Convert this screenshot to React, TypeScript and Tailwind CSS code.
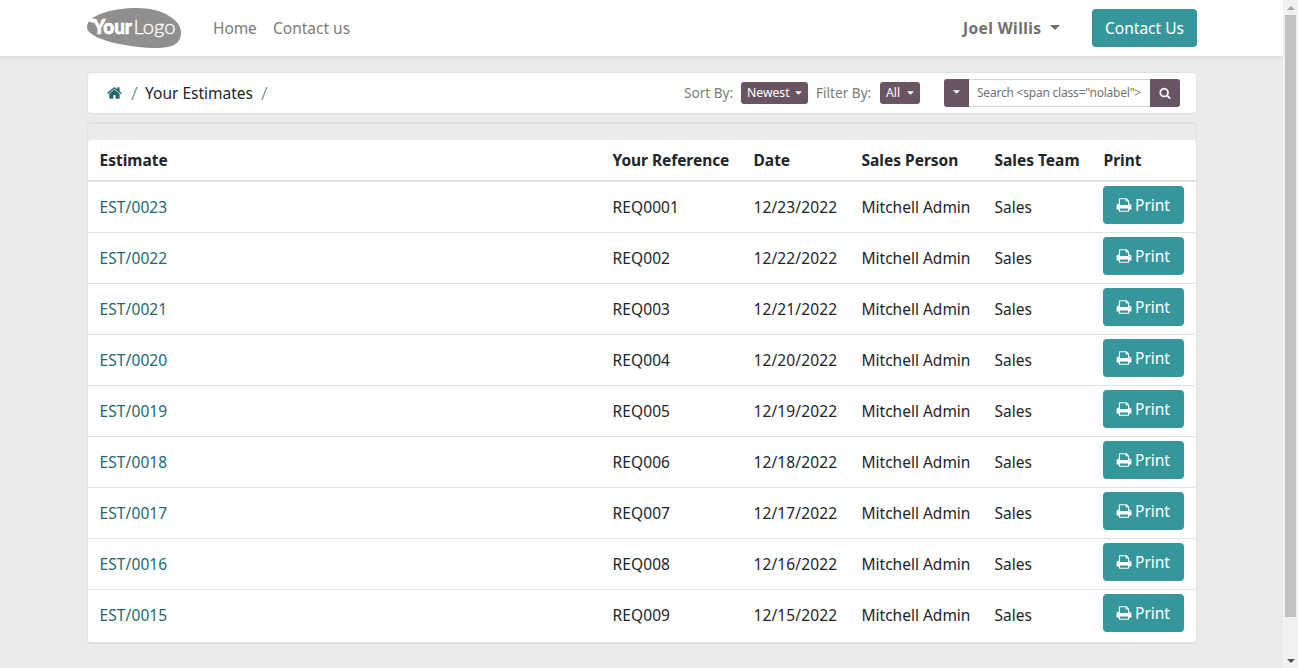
import React from "react";

const HOME =
  "M1408 992v480q0 26-19 45t-45 19h-384v-384h-256v384h-384q-26 0-45-19t-19-45v-480q0-1 .5-3t.5-3l575-474 575 474q1 2 1 6zm223-69l-62 74q-8 9-21 11h-3q-13 0-21-7l-692-577-692 577q-12 8-24 7-13-2-21-11l-62-74q-8-10-7-23.5t11-21.5l719-599q32-26 76-26t76 26l244 204v-195q0-14 9-23t23-9h192q14 0 23 9t9 23v408l219 182q10 8 11 21.5t-7 23.5z";
const PRINT =
  "M448 1536h896v-256h-896v256zm0-640h896v-384h-160q-40 0-68-28t-28-68v-160h-640v640zm1152 64q0-26-19-45t-45-19-45 19-19 45 19 45 45 19 45-19 19-45zm128 0v416q0 13-9.500 22.500t-22.500 9.500h-224v160q0 40-28 68t-68 28h-960q-40 0-68-28t-28-68v-160h-224q-13 0-22.500-9.500t-9.500-22.500v-416q0-79 56.500-135.500t135.500-56.500h64v-544q0-40 28-68t68-28h672q40 0 88 20t76 48l152 152q28 28 48 76t20 88v256h64q79 0 135.500 56.500t56.500 135.500z";
const SEARCH =
  "M1216 832q0-185-131.500-316.500t-316.500-131.500-316.500 131.500-131.500 316.500 131.500 316.500 316.500 131.500 316.500-131.500 131.500-316.500zm512 832q0 52-38 90t-90 38q-54 0-90-38l-343-342q-179 124-399 124-143 0-273.500-55.500t-225-150-150-225-55.500-273.500 55.500-273.500 150-225 225-150 273.500-55.500 273.500 55.500 225 150 150 225 55.500 273.500q0 220-124 399l343 343q37 37 37 90z";

function Icon({ d, className }: { d: string; className: string }) {
  return (
    <svg viewBox="0 0 1792 1792" fill="currentColor" className={className}>
      <path d={d} />
    </svg>
  );
}

function Caret({ className }: { className: string }) {
  return (
    <svg viewBox="0 0 10 5" fill="currentColor" className={className}>
      <path d="M0 0h10L5 5z" />
    </svg>
  );
}

function Slash({ className }: { className: string }) {
  return (
    <span className={`flex w-[14px] items-center text-[19px] font-light text-[#6c757d] ${className}`}>/</span>
  );
}

function Logo() {
  return (
    <svg viewBox="0 0 95 40" className="h-10 w-[95px]">
      <path
        d="M0 19C0 7 26 0 50 0C76 0 94 12 94 25C94 35 86 40 70 40C44 40 0 32 0 19Z"
        fill="#8f8f8f"
      />
      <path d="M0 11.500L6 10.500L8 15L3 14Z" fill="#fff" />
      <text x="6" y="25.500" fontSize="20" fontWeight="900" fill="#fff" stroke="#fff" strokeWidth="0.6" textLength="39" lengthAdjust="spacingAndGlyphs" fontFamily="Lato, sans-serif">
        Your
      </text>
      <text x="46.500" y="25.500" fontSize="20.500" fontWeight="300" fill="#fff" stroke="#fff" strokeWidth="0.35" textLength="42" lengthAdjust="spacingAndGlyphs" fontFamily="Lato, sans-serif">
        Logo
      </text>
    </svg>
  );
}

const rows = [
  ["EST/0023", "REQ0001", "12/23/2022"],
  ["EST/0022", "REQ002", "12/22/2022"],
  ["EST/0021", "REQ003", "12/21/2022"],
  ["EST/0020", "REQ004", "12/20/2022"],
  ["EST/0019", "REQ005", "12/19/2022"],
  ["EST/0018", "REQ006", "12/18/2022"],
  ["EST/0017", "REQ007", "12/17/2022"],
  ["EST/0016", "REQ008", "12/16/2022"],
  ["EST/0015", "REQ009", "12/15/2022"],
];

const GRID = "grid grid-cols-[513px_141px_108px_133px_109px_1fr] pl-[11.5px]";

export default function App() {
  return (
    <div className="flex h-[668px] w-[1298px] overflow-hidden bg-[#ebebeb] font-['Noto_Sans',sans-serif] text-[15.5px] leading-6 text-[#212529]">
      <div className="flex w-[1283px] flex-col">
        <header className="flex h-14 shrink-0 items-center bg-white pr-[86px] pl-[87px] whitespace-nowrap text-[#7b7b7b] shadow-[0_2px_4px_rgba(0,0,0,0.075)]">
          <Logo />
          <nav className="ml-[31px] flex">
            <a className="w-[60px] tracking-[-0.1px]">Home</a>
            <a>Contact us</a>
          </nav>
          <div className="ml-auto flex items-center text-[#6f6f6f]">
            <span className="w-[79px] font-bold tracking-[0.4px]">Joel Willis</span>
            <Caret className="mb-0.5 ml-[8px] h-[5px] w-[10px]" />
          </div>
          <button className="ml-8 h-[38px] w-[105px] rounded bg-[#35979c] text-white">Contact Us</button>
        </header>

        <main className="mt-4 mr-[86px] ml-[87px] flex flex-col">
          <div className="flex h-[42px] items-center rounded border border-[#dee2e6] bg-white pr-4 pl-[19px] whitespace-nowrap">
            <Icon d={HOME} className="h-4 w-4 text-[#22696d]" />
            <Slash className="ml-2" />
            <span className="w-[116px]">Your Estimates</span>
            <Slash className="" />
            <div className="ml-auto flex items-center text-[13.6px] text-[#7b7b7b]">
              <span className="w-[57px]">Sort By:</span>
              <button className="flex h-[22px] w-[67px] items-center justify-between rounded-[3px] bg-[#685563] px-[6px] text-[12.2px] text-white">
                Newest <Caret className="h-[4px] w-[7px]" />
              </button>
              <span className="ml-2 w-16">Filter By:</span>
              <button className="flex h-[22px] w-10 items-center justify-between rounded-[3px] bg-[#685563] px-[6px] text-[12.2px] text-white">
                All <Caret className="h-[4px] w-[7px]" />
              </button>
            </div>
            <div className="ml-6 flex h-7 w-[236px] text-[12px] leading-[26px]">
              <button className="flex w-[25px] items-center justify-center rounded-l-[3px] bg-[#685563] text-white">
                <Caret className="mb-[3px] h-[4px] w-[7px]" />
              </button>
              <div className="w-[181px] overflow-hidden border-y border-[#ced4da] pl-2 tracking-[-0.22px] text-[#6c757d]">
                {'Search <span class="nolabel">'}
              </div>
              <button className="flex w-[30px] items-center justify-center rounded-r-[3px] bg-[#685563] text-white">
                <Icon d={SEARCH} className="h-3 w-3" />
              </button>
            </div>
          </div>

          <section className="mt-2 h-[522px] overflow-hidden rounded border border-t-2 border-b-2 border-[#dee2e6] pt-4">
            <div className="rounded bg-white">
              <div className={`${GRID} h-[42px] items-center border-b-2 border-[#dee2e6] text-[15.5px] font-bold`}>
                <span>Estimate</span>
                <span className="tracking-[-0.05px]">Your Reference</span>
                <span>Date</span>
                <span>Sales Person</span>
                <span>Sales Team</span>
                <span>Print</span>
              </div>
              {rows.map(([est, ref, date]) => (
                <div key={est} className={`${GRID} h-[51px] items-center border-b border-[#dee2e6] last:h-[53px] last:border-b-0 last:pb-[3px]`}>
                  <a className="tracking-[0.1px] text-[#22696d]">{est}</a>
                  <span className="tracking-[0.1px]">{ref}</span>
                  <span className="tracking-[0.12px]">{date}</span>
                  <span>Mitchell Admin</span>
                  <span>Sales</span>
                  <button className="mb-1 -ml-[0.5px] flex h-[38px] w-[81px] items-center rounded bg-[#35979c] pl-[13px] text-white">
                    <Icon d={PRINT} className="mr-[3px] mb-px h-4 w-4" />
                    Print
                  </button>
                </div>
              ))}
            </div>
          </section>
        </main>
      </div>

      <div className="flex w-[15px] flex-col items-center bg-[#f1f1f1]">
        <div className="flex h-[15px] shrink-0 items-center">
          <svg viewBox="0 0 8 4" className="h-1 w-2" fill="#a3a3a3"><path d="M0 4h8L4 0z" /></svg>
        </div>
        <div className="h-[602px] w-[11px] bg-[#c1c1c1]" />
        <div className="mt-auto flex h-[15px] items-center">
          <svg viewBox="0 0 8 4" className="h-1 w-2" fill="#505050"><path d="M0 0h8L4 4z" /></svg>
        </div>
      </div>
    </div>
  );
}
